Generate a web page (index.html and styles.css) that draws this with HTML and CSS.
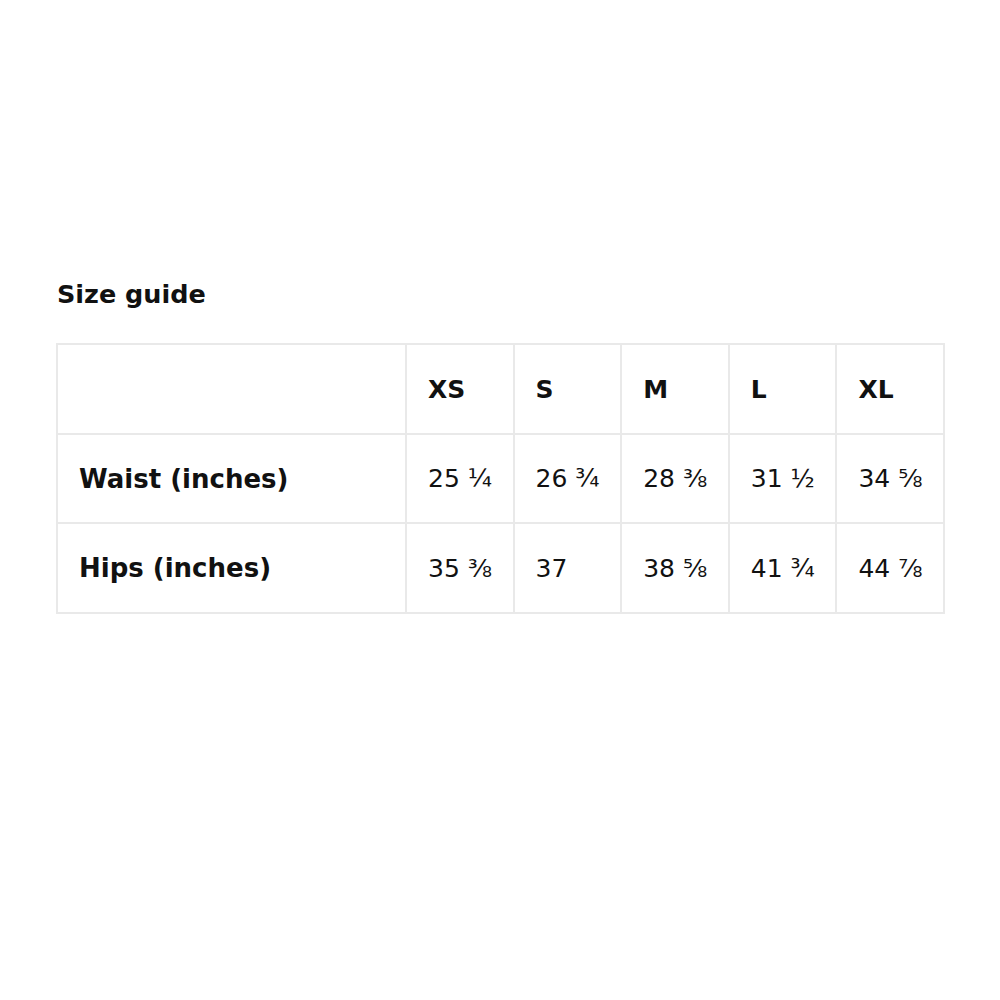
FILE: index.html
```html
<!DOCTYPE html>
<html>
<head>
<meta charset="utf-8">
<link rel="stylesheet" href="styles.css">
</head>
<body>
<div class="page">
  <h2 class="title">Size guide</h2>
  <table class="sizes">
    <colgroup>
      <col class="c-label"><col class="c-size"><col class="c-size"><col class="c-size"><col class="c-size"><col class="c-size">
    </colgroup>
    <tr class="head">
      <td></td><td>XS</td><td>S</td><td>M</td><td>L</td><td>XL</td>
    </tr>
    <tr>
      <th>Waist (inches)</th><td>25 ¼</td><td>26 ¾</td><td>28 ⅜</td><td>31 ½</td><td>34 ⅝</td>
    </tr>
    <tr>
      <th>Hips (inches)</th><td>35 ⅜</td><td>37</td><td>38 ⅝</td><td>41 ¾</td><td>44 ⅞</td>
    </tr>
  </table>
</div>
</body>
</html>
```
FILE: styles.css
```css
html, body {
  margin: 0;
  padding: 0;
  background: #fff;
}
body {
  font-family: "DejaVu Sans", Verdana, sans-serif;
  color: #111;
}
.page {
  padding: 279px 0 0 56px;
}
.title {
  margin: 0 0 34px 1px;
  font-size: 25.5px;
  font-weight: bold;
  line-height: 30px;
  color: #111;
}
.sizes {
  border-collapse: collapse;
  table-layout: fixed;
  width: 888px;
}
.c-label { width: 349px; }
.c-size { width: 107.6px; }
.sizes td, .sizes th {
  border: 2px solid #e9e9e9;
  height: 86.5px;
  padding: 1px 0 0 21px;
  text-align: left;
  vertical-align: middle;
  font-size: 25px;
  font-weight: normal;
  color: #111;
}
.sizes th {
  font-weight: bold;
  font-size: 26px;
}
.sizes .head td {
  font-weight: bold;
}
```
